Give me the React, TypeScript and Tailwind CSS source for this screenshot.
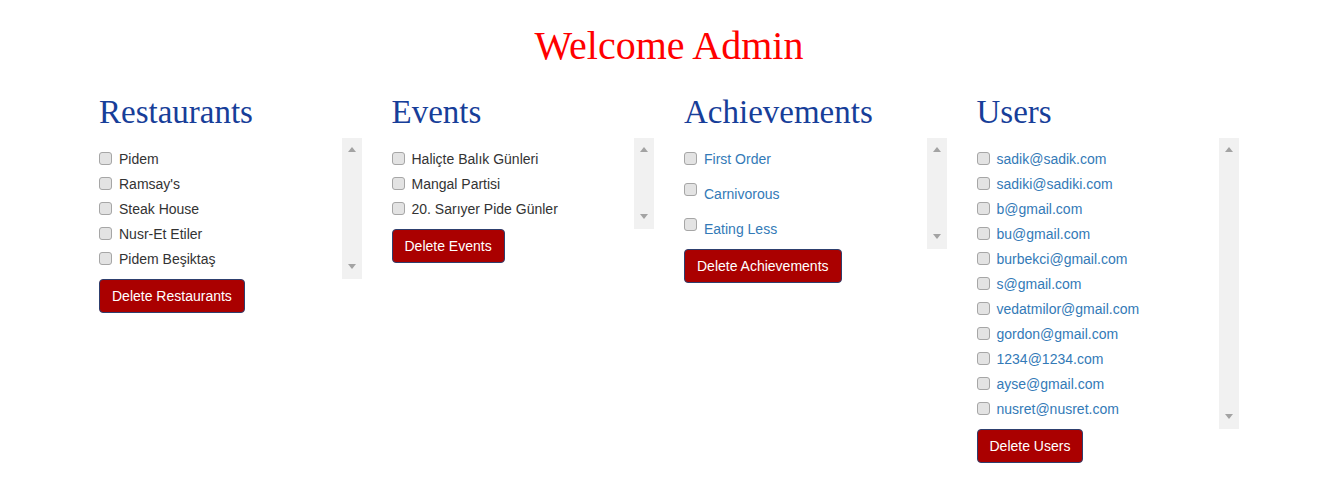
import React from "react";

type Item = { label: string; offset?: boolean };

const Scrollbar = () => (
  <div className="absolute right-0 top-0 bottom-0 w-[20px] bg-[#f1f1f1]">
    <svg className="absolute left-[6px] top-[9px]" width="8" height="5" viewBox="0 0 8 5">
      <polygon points="4,0 8,5 0,5" fill="#a3a3a3" />
    </svg>
    <svg className="absolute left-[6px] bottom-[10px]" width="8" height="5" viewBox="0 0 8 5">
      <polygon points="0,0 8,0 4,5" fill="#a3a3a3" />
    </svg>
  </div>
);

function Column({
  title,
  items,
  button,
  link,
  spaced,
}: {
  title: string;
  items: Item[];
  button: string;
  link?: boolean;
  spaced?: boolean;
}) {
  return (
    <div className="px-[15px]">
      <h2 className="mt-[26px] text-[33px] leading-[36px] text-[#173e99] font-['Liberation_Serif',serif]">
        {title}
      </h2>
      <div className="mt-[8px] relative py-[8px] pr-[20px]">
        <div className={`flex flex-col ${spaced ? "gap-[10px]" : ""}`}>
          {items.map((it) => (
            <div key={it.label} className="h-[25px] flex items-center">
              <span
                className={`inline-block shrink-0 w-[13px] h-[13px] mr-[7px] rounded-[3px] border border-[#a6a6a6] bg-[#e3e3e3] ${it.offset ? "relative -top-[4px]" : ""}`}
              />
              <span
                className={`relative top-[1px] text-[14px] ${link ? "text-[#337ab7]" : "text-[#333333]"}`}
              >
                {it.label}
              </span>
            </div>
          ))}
        </div>
        <Scrollbar />
      </div>
      <button className="h-[34px] px-[12px] bg-[#aa0000] text-white text-[14px] border border-[#2e3f6e] rounded-[4px]">
        {button}
      </button>
    </div>
  );
}

export default function App() {
  return (
    <div className="bg-white w-[1325px] h-[484px] font-['Liberation_Sans',Arial,sans-serif]">
      <div className="ml-[84px] w-[1170px]">
        <h1 className="pt-[24px] text-center text-[40px] leading-[44px] text-[#ff0000] font-['Liberation_Serif',serif]">
          Welcome Admin
        </h1>
        <div className="grid grid-cols-4">
          <Column
            title="Restaurants"
            items={[
              { label: "Pidem" },
              { label: "Ramsay's" },
              { label: "Steak House" },
              { label: "Nusr-Et Etiler" },
              { label: "Pidem Beşiktaş" },
            ]}
            button="Delete Restaurants"
          />
          <Column
            title="Events"
            items={[
              { label: "Haliçte Balık Günleri" },
              { label: "Mangal Partisi" },
              { label: "20. Sarıyer Pide Günler" },
            ]}
            button="Delete Events"
          />
          <Column
            title="Achievements"
            items={[
              { label: "First Order" },
              { label: "Carnivorous", offset: true },
              { label: "Eating Less", offset: true },
            ]}
            button="Delete Achievements"
            link
            spaced
          />
          <Column
            title="Users"
            items={[
              { label: "sadik@sadik.com" },
              { label: "sadiki@sadiki.com" },
              { label: "b@gmail.com" },
              { label: "bu@gmail.com" },
              { label: "burbekci@gmail.com" },
              { label: "s@gmail.com" },
              { label: "vedatmilor@gmail.com" },
              { label: "gordon@gmail.com" },
              { label: "1234@1234.com" },
              { label: "ayse@gmail.com" },
              { label: "nusret@nusret.com" },
            ]}
            button="Delete Users"
            link
          />
        </div>
      </div>
    </div>
  );
}
